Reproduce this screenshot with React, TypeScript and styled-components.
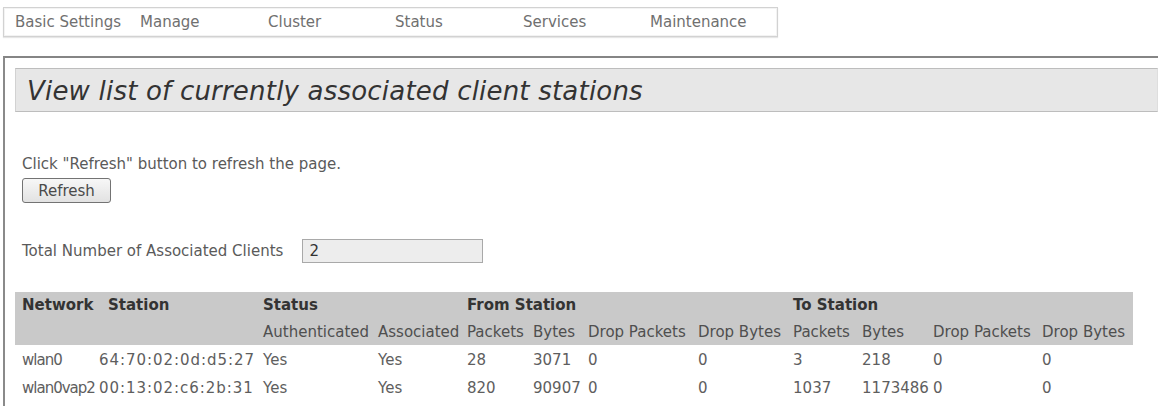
import React from "react";
import styled, { createGlobalStyle } from "styled-components";

const GlobalStyle = createGlobalStyle`
  html, body {
    margin: 0;
    padding: 0;
    background: #ffffff;
  }
  body {
    font-family: "DejaVu Sans", Verdana, sans-serif;
    font-size: 15px;
    color: #5a5a5a;
  }
`;

const Page = styled.div`
  padding: 7px 0 0 3px;
  width: 1155px;
`;

const TabBar = styled.div`
  display: flex;
  align-items: center;
  width: 773px;
  height: 28px;
  border: 1px solid #d2d2d2;
  box-shadow: inset 0 0 0 1px #f3f3f3, 0 1px 1px #e6e6e6;
  color: #707070;
`;

const Tab = styled.div<{ $width: number; $first?: boolean }>`
  width: ${({ $width }) => $width}px;
  padding-left: ${({ $first }) => ($first ? 11 : 0)}px;
  box-sizing: border-box;
  white-space: nowrap;
`;

const Panel = styled.div`
  margin-top: 19px;
  border-top: 2px solid #858585;
  border-left: 2px solid #8a8a8a;
  padding: 10px 0 6px 10px;
`;

const TitleBar = styled.div`
  display: flex;
  align-items: center;
  height: 42px;
  background: #e7e7e7;
  border-top: 1px solid #bdbdbd;
  border-bottom: 1px solid #bdbdbd;
  border-left: 1px solid #d2d2d2;
  border-right: 1px solid #dedede;
  padding-left: 11px;
`;

const Title = styled.h1`
  margin: 2px 0 0;
  font-size: 26px;
  font-weight: normal;
  font-style: italic;
  color: #333333;
  letter-spacing: 0.2px;
`;

const Section = styled.div`
  padding-left: 7px;
`;

const Hint = styled.p`
  margin: 43px 0 0;
  line-height: 18px;
`;

const Button = styled.button`
  margin-top: 5px;
  width: 89px;
  height: 25px;
  font-family: inherit;
  font-size: 15px;
  color: #4a4a4a;
  background: linear-gradient(#f7f7f7, #e2e2e2);
  border: 1px solid #737373;
  border-radius: 3px;
  padding: 0;
`;

const CountRow = styled.div`
  display: flex;
  align-items: center;
  gap: 19px;
  margin-top: 36px;
`;

const CountInput = styled.div`
  width: 173px;
  height: 22px;
  line-height: 22px;
  padding-left: 6px;
  background: #ededed;
  border: 1px solid #a9a9a9;
  color: #333333;
`;

const Table = styled.table`
  margin-top: 29px;
  width: 1118px;
  table-layout: fixed;
  border-collapse: collapse;
  font-size: 15px;
`;

const HeadRow = styled.tr<{ $height: number }>`
  background: #c9c9c9;
  height: ${({ $height }) => $height}px;
`;

const Th = styled.th<{ $indent?: number; $bold?: boolean }>`
  text-align: left;
  padding: 0 0 0 ${({ $indent }) => $indent ?? 0}px;
  font-weight: ${({ $bold }) => ($bold ? "bold" : "normal")};
  color: ${({ $bold }) => ($bold ? "#333333" : "#4f4f4f")};
  white-space: nowrap;
  vertical-align: middle;
`;

const BodyRow = styled.tr`
  height: 28px;
`;

const Td = styled.td<{ $indent?: number; $spacing?: number }>`
  padding: 2px 0 0 ${({ $indent }) => $indent ?? 0}px;
  color: #5e5e5e;
  letter-spacing: ${({ $spacing }) => $spacing ?? 0}px;
  white-space: nowrap;
  vertical-align: middle;
`;

const tabs: [string, number][] = [
  ["Basic Settings", 136],
  ["Manage", 128],
  ["Cluster", 127],
  ["Status", 128],
  ["Services", 127],
  ["Maintenance", 120],
];

const colWidths = [82, 166, 115, 89, 66, 55, 110, 95, 69, 71, 109, 91];

const subHeads = [
  "Authenticated",
  "Associated",
  "Packets",
  "Bytes",
  "Drop Packets",
  "Drop Bytes",
  "Packets",
  "Bytes",
  "Drop Packets",
  "Drop Bytes",
];

const clients = [
  ["wlan0", "64:70:02:0d:d5:27", "Yes", "Yes", "28", "3071", "0", "0", "3", "218", "0", "0"],
  ["wlan0vap2", "00:13:02:c6:2b:31", "Yes", "Yes", "820", "90907", "0", "0", "1037", "1173486", "0", "0"],
];

// the original font sets names tighter and MAC addresses wider than DejaVu
const cellSpacing = (col: number) => (col === 0 ? -1 : col === 1 ? 0.95 : 0);
const cellIndent = (col: number) => (col === 0 ? 7 : col === 1 ? 2 : 0);

export default function App() {
  return (
    <Page>
      <GlobalStyle />
      <TabBar>
        {tabs.map(([label, width], i) => (
          <Tab key={label} $width={width} $first={i === 0}>
            {label}
          </Tab>
        ))}
      </TabBar>

      <Panel>
        <TitleBar>
          <Title>View list of currently associated client stations</Title>
        </TitleBar>

        <Section>
          <Hint>Click "Refresh" button to refresh the page.</Hint>
          <Button type="button">Refresh</Button>
          <CountRow>
            <span>Total Number of Associated Clients</span>
            <CountInput>2</CountInput>
          </CountRow>
        </Section>

        <Table>
          <colgroup>
            {colWidths.map((w, i) => (
              <col key={i} style={{ width: w }} />
            ))}
          </colgroup>
          <thead>
            <HeadRow $height={26}>
              <Th $bold $indent={7}>
                Network
              </Th>
              <Th $bold $indent={11}>
                Station
              </Th>
              <Th $bold colSpan={2}>
                Status
              </Th>
              <Th $bold colSpan={4}>
                From Station
              </Th>
              <Th $bold colSpan={4}>
                To Station
              </Th>
            </HeadRow>
            <HeadRow $height={27}>
              <Th $indent={7} />
              <Th />
              {subHeads.map((h, i) => (
                <Th key={i}>{h}</Th>
              ))}
            </HeadRow>
          </thead>
          <tbody>
            {clients.map((row) => (
              <BodyRow key={row[0]}>
                {row.map((cell, i) => (
                  <Td key={i} $indent={cellIndent(i)} $spacing={cellSpacing(i)}>
                    {cell}
                  </Td>
                ))}
              </BodyRow>
            ))}
          </tbody>
        </Table>
      </Panel>
    </Page>
  );
}
